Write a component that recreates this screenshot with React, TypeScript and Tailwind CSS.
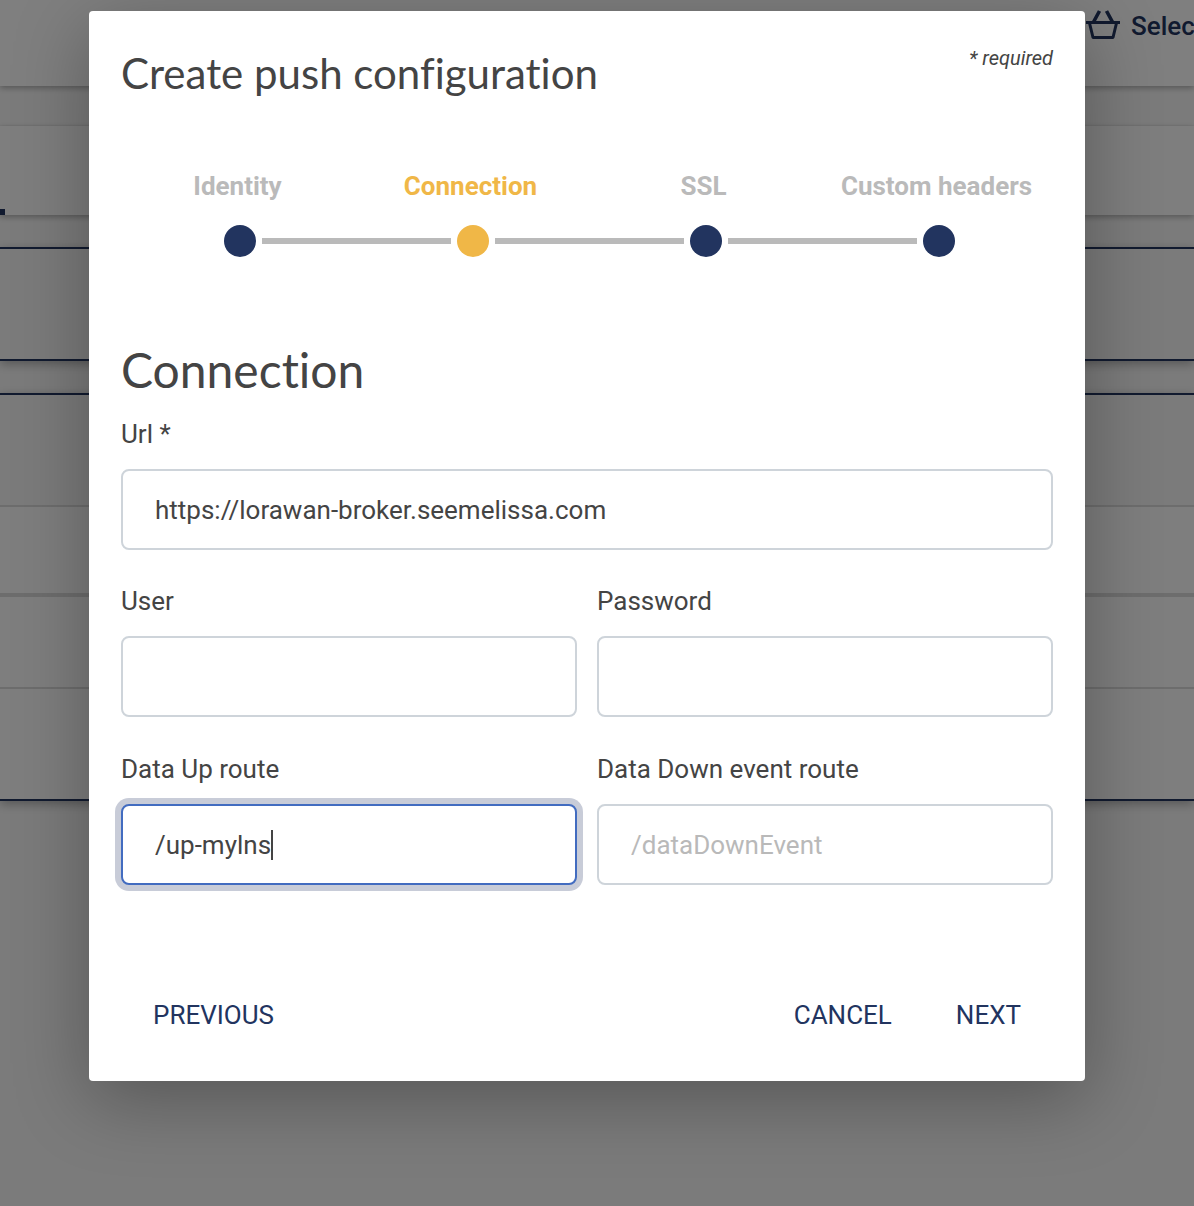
import { Fragment } from "react";
import type { InputHTMLAttributes } from "react";

const steps = [
  { label: "Identity", active: false },
  { label: "Connection", active: true },
  { label: "SSL", active: false },
  { label: "Custom headers", active: false },
];

function BasketIcon() {
  return (
    <svg width="34" height="30" viewBox="0 0 34 30" fill="none" stroke="#23355f" strokeWidth="3" aria-hidden="true">
      <path d="M0 13.5H34" />
      <path d="M3.5 14L7 28.5H27L30.5 14" strokeLinejoin="round" />
      <path d="M7.5 13L13.5 2M26.5 13L20.5 2" strokeWidth="3.6" />
    </svg>
  );
}

function Backdrop() {
  return (
    <div className="flex min-h-screen flex-col bg-[#f7f7f7]" aria-hidden="true">
      <header className="relative flex h-[86px] justify-end bg-white shadow-[0_2px_6px_rgba(0,0,0,0.3)]">
        <div className="flex h-[52px] w-[108px] items-center gap-[11px] whitespace-nowrap text-[26px] font-medium text-[#23355f]">
          <span className="shrink-0 pb-1">
            <BasketIcon />
          </span>
          <span>Selec</span>
        </div>
      </header>
      <div className="h-10 border-b border-[#f1f1f1]" />
      <div className="relative flex h-[89px] items-end bg-[#fdfdfd] shadow-[0_2px_6px_rgba(0,0,0,0.3)]">
        <div className="h-[6px] w-[5px] bg-[#23355f]" />
      </div>
      <div className="mt-8 h-[114px] border-y-2 border-[#23355f] shadow-[0_3px_10px_rgba(0,0,0,0.3)]" />
      <div className="mt-8 border-y-2 border-[#23355f] bg-[#fdfdfd] shadow-[0_3px_10px_rgba(0,0,0,0.3)]">
        <div className="h-[112px] border-b-2 border-[#dadada] bg-[#f7f7f7]" />
        <div className="h-[90px] border-b-4 border-[#dadada]" />
        <div className="h-[92px] border-b-2 border-[#dadada]" />
        <div className="h-[110px]" />
      </div>
    </div>
  );
}

type FieldProps = InputHTMLAttributes<HTMLInputElement> & {
  id: string;
  label: string;
  editing?: boolean;
};

function Field({ id, label, editing = false, ...rest }: FieldProps) {
  return (
    <div className="min-w-0">
      <label htmlFor={id} className="block leading-8">
        {label}
      </label>
      <div className="relative mt-[19px]">
        <input
          id={id}
          className={
            editing
              ? "block h-[81px] w-full rounded-lg border-2 border-[#426cc0] bg-white px-8 caret-transparent shadow-[0_0_0_6px_#c8ccd8] outline-none"
              : "block h-[81px] w-full rounded-lg border-2 border-[#ced4da] bg-white px-8 outline-none placeholder:text-[#b9b9b9]"
          }
          {...rest}
        />
        {editing && (
          <div className="pointer-events-none absolute inset-y-0 left-[34px] flex items-center" aria-hidden="true">
            <span className="invisible">{rest.defaultValue}</span>
            <span className="h-[30px] w-[2px] bg-[#444]" />
          </div>
        )}
      </div>
    </div>
  );
}

function Stepper() {
  return (
    <div className="mt-[67px]">
      <ol className="grid grid-cols-4 text-center font-bold leading-8">
        {steps.map((s) => (
          <li key={s.label} className={s.active ? "text-[#f0b747]" : "text-[#bababa]"}>
            {s.label}
          </li>
        ))}
      </ol>
      <div className="mt-[23px] flex items-center gap-[6px] pl-[103px] pr-[98px]">
        {steps.map((s, i) => (
          <Fragment key={s.label}>
            {i > 0 && <span className="h-[6px] flex-1 bg-[#bababa]" />}
            <span className={s.active ? "size-8 rounded-full bg-[#f0b747]" : "size-8 rounded-full bg-[#22345f]"} />
          </Fragment>
        ))}
      </div>
    </div>
  );
}

export default function App() {
  return (
    <div className="relative font-[Roboto,sans-serif] text-[26px] text-[#444]">
      <Backdrop />
      <div className="absolute inset-0 bg-black/50 pl-[89px] pr-[109px] pt-[11px]">
        <div
          role="dialog"
          aria-modal="true"
          aria-labelledby="dialog-title"
          className="rounded bg-white px-8 pb-8 pt-8 shadow-[0_18px_76px_rgba(0,0,0,0.3)]"
        >
          <div className="flex items-start justify-between">
            <h1
              id="dialog-title"
              className="font-[Lato,sans-serif] text-[42px] font-normal leading-[60px] [font-variant-ligatures:none]"
            >
              Create push configuration
            </h1>
            <p className="text-xl italic leading-[30px]">* required</p>
          </div>
          <Stepper />
          <form onSubmit={(e) => e.preventDefault()}>
            <h2 className="mt-[85px] font-[Lato,sans-serif] text-[48px] font-normal leading-[56px] [font-variant-ligatures:none]">
              Connection
            </h2>
            <div className="mt-5">
              <Field id="url" label="Url *" defaultValue="https://lorawan-broker.seemelissa.com" />
            </div>
            <div className="mt-[35px] grid grid-cols-2 gap-x-5 gap-y-[36px]">
              <Field id="user" label="User" />
              <Field id="password" label="Password" type="password" />
              <Field id="up-route" label="Data Up route" defaultValue="/up-mylns" editing />
              <Field id="down-route" label="Data Down event route" placeholder="/dataDownEvent" />
            </div>
            <div className="mt-24 flex text-[#22345f]">
              <button type="button" className="mr-auto h-[68px] px-8">
                PREVIOUS
              </button>
              <button type="button" className="h-[68px] px-8">
                CANCEL
              </button>
              <button type="submit" className="h-[68px] px-8">
                NEXT
              </button>
            </div>
          </form>
        </div>
      </div>
    </div>
  );
}
